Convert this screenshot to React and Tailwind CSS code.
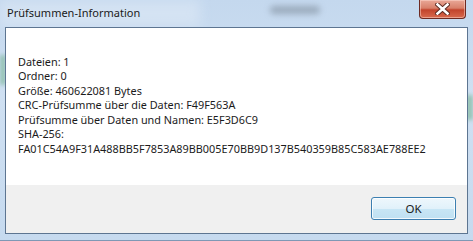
export default function App() {
  const font = { fontFamily: '"Noto Sans", "Open Sans", sans-serif' };
  return (
    <div className="w-[473px] h-[241px] overflow-hidden" style={font}>
      <div className="relative flex h-full w-full flex-col bg-[linear-gradient(180deg,#c4d8ee_0%,#cfe0f2_40%,#c6daef_100%)]">
        {/* blurred background bits behind glass */}
        <div className="absolute left-[270px] top-[6px] h-[8px] w-[50px] rounded-full bg-[#7d8b9a] opacity-60 blur-[3px]" />
        <div className="absolute left-[0px] top-[55px] h-[30px] w-[6px] bg-[#6fb08a] opacity-60 blur-[2px]" />
        <div className="absolute right-[0px] top-[95px] h-[25px] w-[7px] bg-[#6fb08a] opacity-60 blur-[2px]" />
        <div className="absolute left-[0px] top-[0px] h-[27px] w-[200px] bg-[#e2ecf7] opacity-50 blur-[6px]" />

        {/* title bar */}
        <div className="relative flex h-[27px] items-start justify-between pl-[7px] pr-[7px]">
          <span className="mt-[6px] text-[11px] leading-[14px] text-[#1a1a1a]">Prüfsummen-Information</span>
          <div className="flex h-[19px] w-[47px] items-center justify-center rounded-b-[4px] border border-t-0 border-[#6e2a22] bg-[linear-gradient(180deg,#e9a898_0%,#d8806a_45%,#c2442c_55%,#d86a4e_100%)] shadow-[inset_0_0_0_1px_rgba(255,220,210,0.5)]">
            <svg width="15" height="12" viewBox="0 0 15 12">
              <path d="M2.5 1.5 L12.5 10.5 M12.5 1.5 L2.5 10.5" stroke="#5a2a22" strokeWidth="4.5" strokeLinecap="square" />
              <path d="M2.5 1.5 L12.5 10.5 M12.5 1.5 L2.5 10.5" stroke="#ffffff" strokeWidth="2.6" strokeLinecap="square" />
            </svg>
          </div>
        </div>

        {/* client area */}
        <div className="relative mx-[5px] flex flex-1 flex-col border border-[#5d7591]">
          <div className="h-[157px] bg-white pl-[12px] pt-[27px] text-[10.85px] leading-[14.45px] text-[#1b1b1b]">
            <div>Dateien: 1</div>
            <div>Ordner: 0</div>
            <div>Größe: 460622081 Bytes</div>
            <div>CRC-Prüfsumme über die Daten: F49F563A</div>
            <div>Prüfsumme über Daten und Namen: E5F3D6C9</div>
            <div>SHA-256:</div>
            <div>FA01C54A9F31A488BB5F7853A89BB005E70BB9D137B540359B85C583AE788EE2</div>
          </div>
          <div className="flex flex-1 items-start justify-end bg-[#f0f0f0] pr-[11px] pt-[12px]">
            <button className="flex h-[23px] w-[85px] items-center justify-center rounded-[3px] border border-[#3c7fb1] bg-[linear-gradient(180deg,#eef7fc_0%,#e1f1fa_50%,#c8e6f5_51%,#bfe0f2_100%)] text-[11.5px] text-[#1b1b1b] shadow-[inset_0_0_0_1px_rgba(255,255,255,0.8)]">
              OK
            </button>
          </div>
        </div>
        <div className="h-[7px] border-b border-[#7f98b5]" />
      </div>
    </div>
  );
}
